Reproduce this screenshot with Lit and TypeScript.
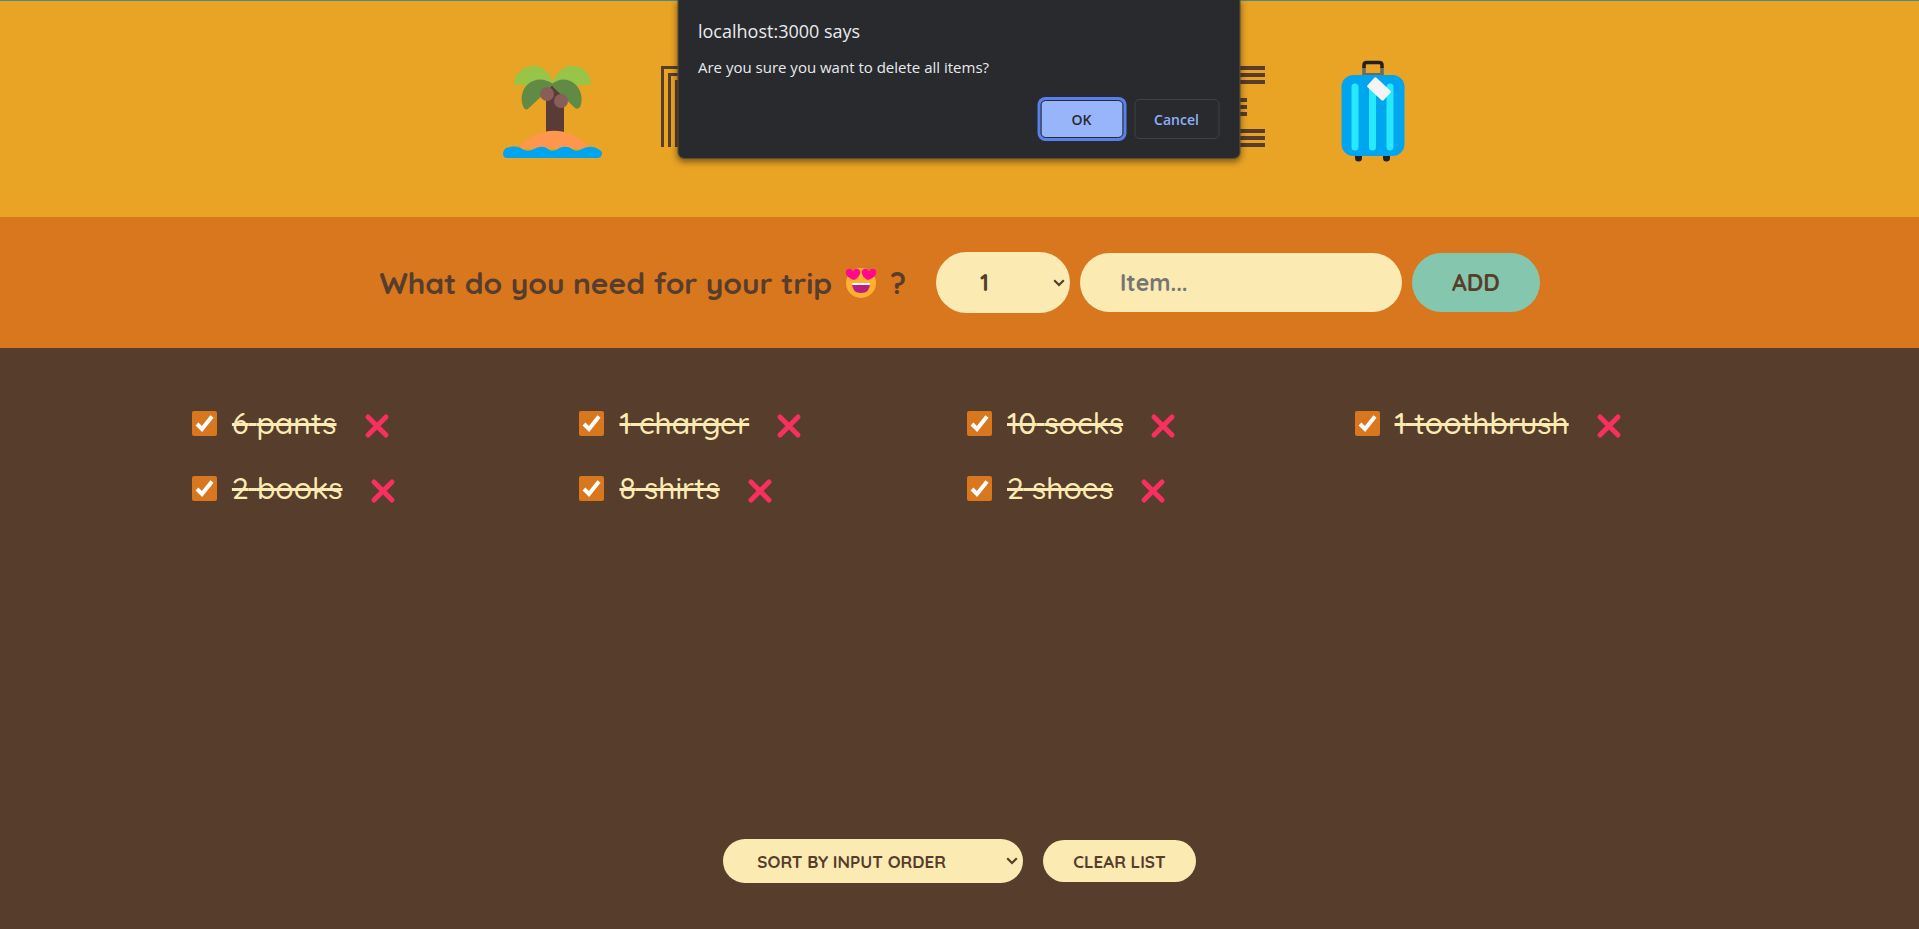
import { LitElement, html, css, svg } from "lit";
import { customElement, state } from "lit/decorators.js";
import { classMap } from "lit/directives/class-map.js";

interface Item {
  id: number;
  quantity: number;
  description: string;
  packed: boolean;
}

const palm = html`<svg class="palm" viewBox="0 -5 100 102" aria-hidden="true">
  <path d="M44 28 L50 20 L62 31 V68 H44Z" fill="#5b3b38" />
  <path d="M12 18 C14 7 22 1 32 1 C42 1 49 9 51 18 C53 9 60 1 70 1 C80 1 87 7 89 17 Q89 20 86 20 H15 Q12 20 12 18Z" fill="#98c547" />
  <path d="M51 19 C43 13 33 13 26 19 C19 25 18 36 22 43 Q24 46 27 43 L47 24Z" fill="#618a45" />
  <path d="M50 19 C57 13 66 13 73 19 C80 25 81 36 78 42 Q76 45 73 43 L51 22Z" fill="#618a45" />
  <circle cx="45" cy="29" r="7" fill="#8a5e58" />
  <circle cx="59" cy="36" r="7" fill="#8a5e58" />
  <path d="M16 83 C38 60 66 60 88 83Z" fill="#fe964e" />
  <path d="M4 83 C10 81 16 81 20 84 Q26 87 32 84 C38 81 42 81 46 84 Q50 87 56 84 C60 81 66 81 70 84 Q74 87 80 84 C86 81 91 81 96 84 Q100 86 100 88 Q100 93 95 93 H5 Q1 93 1 88 Q1 85 4 83Z" fill="#00a4ef" />
</svg>`;

const suitcase = html`<svg class="suitcase" viewBox="0 0 64 102" aria-hidden="true">
  <path d="M23 15 V7" fill="none" stroke="#686867" stroke-width="3.5" />
  <path d="M41 15 V7" fill="none" stroke="#686867" stroke-width="3.5" />
  <path d="M22 14 H42" stroke="#686867" stroke-width="2" />
  <path d="M23 8 V5 Q23 2.500 26 2.500 H38 Q41 2.500 41 5 V8" fill="none" stroke="#212121" stroke-width="3.500" />
  <path d="M14 95 H21 V98 a3.500 3.500 0 0 1 -7 0Z M42 95 H49 V98 a3.500 3.500 0 0 1 -7 0Z" fill="#212121" />
  <rect x="0.500" y="15" width="63" height="81" rx="12" fill="#00a5ef" />
  <path d="M14 27 V87 M31.500 27 V87 M49 27 V87" stroke="#26eafc" stroke-width="7" stroke-linecap="round" />
  <rect x="-11" y="-6.500" width="22" height="13" rx="1.500" transform="translate(38 29) rotate(43)" fill="#f4f4f4" />
</svg>`;

const heartEyes = html`<svg class="face" viewBox="0 0 32 32" role="img" aria-label="heart eyes">
  <circle cx="16" cy="16" r="15" fill="#ffb02e" />
  <path d="M7 16 H25 Q25 26 16 26 Q7 26 7 16Z" fill="#bb1d80" />
  <path d="M7 16 H25 V17 Q25 18 24 18 H8 Q7 18 7 17Z" fill="#fff" />
  <path d="M9 13 C3 11 0 8 1 4 C2 1 6 1 8 4 C10 1 14 1 15 4 C16 8 12 12 9 13Z" fill="#ff0a8c" />
  <path d="M23 13 C29 11 32 8 31 4 C30 1 26 1 24 4 C22 1 18 1 17 4 C16 8 20 12 23 13Z" fill="#ff0a8c" />
</svg>`;

const chevron = html`<svg class="chevron" viewBox="0 0 12 8" aria-hidden="true">
  <path d="M1.200 1.200 L6 6 L10.800 1.200" fill="none" stroke="currentColor" stroke-width="2.200" />
</svg>`;

@customElement("app-root")
export class AppRoot extends LitElement {
  @state() private items: Item[] = [
    [6, "pants"],
    [1, "charger"],
    [10, "socks"],
    [1, "toothbrush"],
    [2, "books"],
    [8, "shirts"],
    [2, "shoes"],
  ].map(([quantity, description], id) => ({
    id,
    quantity: quantity as number,
    description: description as string,
    packed: true,
  }));
  @state() private confirming = true;

  static styles = css`
    :host {
      --brown: #563d2c;
      --cream: #fbeab1;
      --orange: #d9771f;
      display: grid;
      grid-template-rows: auto auto 1fr;
      min-height: 100vh;
      color: var(--brown);
      font-family: Quicksand, Lato, sans-serif;
      font-weight: 700;
    }
    * {
      box-sizing: border-box;
    }
    button, input, select {
      font: inherit;
      color: inherit;
      border: none;
      margin: 0;
    }
    button {
      cursor: pointer;
    }
    header {
      display: flex;
      justify-content: center;
      align-items: flex-start;
      height: 217px;
      padding: 59px 12px 0 0;
      border-top: 1px solid #4d8a86;
      background: #e9a325;
    }
    .palm {
      width: 100px;
      height: 102px;
    }
    .suitcase {
      width: 64px;
      height: 102px;
    }
    .banner {
      display: flex;
      justify-content: space-between;
      width: 604px;
      height: 81px;
      margin: 6px 76px 0 59px;
    }
    .arch {
      width: 40px;
      height: 81px;
      padding: 4px 0 0 4px;
      border: solid var(--brown);
      border-width: 3px 0 0 3px;
    }
    .arch .arch {
      width: auto;
      height: 74px;
    }
    .arch .arch .arch {
      height: 67px;
    }
    .stripes {
      display: flex;
      flex-direction: column;
      justify-content: space-between;
      width: 40px;
    }
    .stripe {
      height: 18px;
      background: repeating-linear-gradient(var(--brown) 0 4px, transparent 4px 7px);
    }
    .stripe.short {
      margin-right: 18px;
    }
    .add {
      display: flex;
      justify-content: center;
      align-items: center;
      gap: 10px;
      height: 131px;
      background: var(--orange);
      font-size: 23px;
    }
    .add h3 {
      display: flex;
      align-items: center;
      gap: 13px;
      margin: 0 20px 0 0;
      font-size: 30px;
    }
    .face {
      width: 32px;
      height: 32px;
    }
    .pick {
      display: grid;
      align-items: center;
    }
    .pick > * {
      grid-area: 1 / 1;
    }
    .pick select {
      appearance: none;
      width: 100%;
      border-radius: 62px;
      background: var(--cream);
    }
    .chevron {
      width: 12px;
      height: 8px;
      justify-self: end;
      margin-right: 5px;
      pointer-events: none;
    }
    .quantity {
      width: 134px;
    }
    .quantity select {
      height: 61px;
      padding: 0 44px;
    }
    .name {
      width: 322px;
      height: 59px;
      padding: 0 40px;
      border-radius: 62px;
      background: var(--cream);
    }
    .name::placeholder {
      color: #757575;
    }
    .add button {
      height: 59px;
      padding: 0 40px;
      border-radius: 62px;
      background: #84c7ae;
    }
    main {
      display: flex;
      flex-direction: column;
      justify-content: space-between;
      align-items: center;
      gap: 40px;
      padding: 50px 0 46px;
      background: var(--brown);
    }
    ul {
      display: grid;
      grid-template-columns: repeat(4, 1fr);
      gap: 15px;
      width: 80%;
      margin: 0;
      padding: 0;
      list-style: none;
    }
    li {
      display: flex;
      align-items: center;
      height: 50px;
      color: var(--cream);
      font-size: 30px;
      font-weight: 500;
    }
    .item {
      display: flex;
      align-items: center;
      gap: 15px;
    }
    .packed {
      text-decoration: line-through;
      text-decoration-thickness: 3px;
    }
    .tick {
      display: grid;
      color: #fff;
    }
    .tick > * {
      grid-area: 1 / 1;
      width: 25px;
      height: 25px;
    }
    .tick input {
      appearance: none;
      border-radius: 2px;
      background: var(--cream);
    }
    .tick input:checked {
      background: var(--orange);
    }
    .tick svg {
      pointer-events: none;
    }
    .remove {
      display: flex;
      margin: 6px 0 0 27px;
      padding: 0;
      background: none;
    }
    .remove svg {
      width: 27px;
      height: 27px;
    }
    .actions {
      display: flex;
      align-items: center;
      gap: 20px;
      font-size: 17px;
    }
    .sort {
      width: 300px;
    }
    .sort select {
      height: 44px;
      padding: 0 34px;
    }
    .clear {
      height: 42px;
      padding: 0 30px;
      border-radius: 62px;
      background: var(--cream);
    }
    .dialog {
      position: absolute;
      top: 0;
      left: 50%;
      transform: translateX(-50%);
      width: 561px;
      margin-left: -1px;
      padding: 19px 20px;
      border-radius: 0 0 6px 6px;
      background: #292a2d;
      box-shadow: 0 0 0 1px #5c5034, 0 3px 6px 1px rgb(0 0 0 / 45%);
      color: #e8eaed;
      font-family: "Segoe UI", "Open Sans", sans-serif;
      font-size: 15px;
      font-weight: 400;
    }
    .dialog h2 {
      margin: 0;
      font-size: 18px;
      line-height: 24px;
      font-weight: 400;
    }
    .dialog p {
      margin: 13px 0 21px;
      line-height: 22px;
    }
    .choices {
      display: flex;
      justify-content: flex-end;
      align-items: center;
      gap: 11px;
    }
    .choices button {
      height: 40px;
      border: 1px solid #3f4145;
      border-radius: 5px;
      background: none;
      color: #8fb0f9;
      font-size: 14px;
      font-weight: 600;
      width: 85px;
    }
    .choices .ok {
      width: 83px;
      height: 38px;
      border-color: #292a2d;
      background: #98b4fa;
      background-clip: padding-box;
      box-shadow: 0 0 0 3px #5a80ee;
      color: #292a2d;
    }
  `;

  private toggle(id: number) {
    this.items = this.items.map((item) => (item.id === id ? { ...item, packed: !item.packed } : item));
  }

  private remove(id: number) {
    this.items = this.items.filter((item) => item.id !== id);
  }

  private add(event: Event) {
    event.preventDefault();
    const form = event.target as HTMLFormElement;
    const data = new FormData(form);
    const description = String(data.get("description")).trim();
    if (!description) return;
    this.items = [...this.items, { id: Date.now(), quantity: Number(data.get("quantity")), description, packed: false }];
    form.reset();
  }

  private clear() {
    this.items = [];
    this.confirming = false;
  }

  private renderItem(item: Item) {
    return html`<li>
      <label class="item">
        <span class="tick">
          <input type="checkbox" .checked=${item.packed} @change=${() => this.toggle(item.id)} />
          <svg viewBox="0 0 25 25" aria-hidden="true">
            ${item.packed ? svg`<path d="M5 13 L10 18 L20 5.500" fill="none" stroke="currentColor" stroke-width="4" />` : ""}
          </svg>
        </span>
        <span class=${classMap({ packed: item.packed })}>${item.quantity} ${item.description}</span>
      </label>
      <button class="remove" aria-label="Remove ${item.description}" @click=${() => this.remove(item.id)}>
        <svg viewBox="0 0 27 27" aria-hidden="true">
          <path d="M4 4 L22 22 M22 4 L4 22" stroke="#f92f60" stroke-width="5" stroke-linecap="round" />
        </svg>
      </button>
    </li>`;
  }

  render() {
    return html`
      <header>
        ${palm}
        <div class="banner" aria-hidden="true">
          <div class="arch"><div class="arch"><div class="arch"></div></div></div>
          <div class="stripes">
            <div class="stripe"></div>
            <div class="stripe short"></div>
            <div class="stripe"></div>
          </div>
        </div>
        ${suitcase}
      </header>
      <form class="add" @submit=${this.add}>
        <h3><span>What do you need for your trip</span>${heartEyes}<span>?</span></h3>
        <div class="pick quantity">
          <select name="quantity" aria-label="Quantity">
            ${Array.from({ length: 20 }, (_, i) => html`<option value=${i + 1}>${i + 1}</option>`)}
          </select>
          ${chevron}
        </div>
        <input class="name" name="description" type="text" placeholder="Item..." aria-label="Item" />
        <button>ADD</button>
      </form>
      <main>
        <ul>${this.items.map((item) => this.renderItem(item))}</ul>
        <div class="actions">
          <div class="pick sort">
            <select aria-label="Sort">
              <option>SORT BY INPUT ORDER</option>
              <option>SORT BY DESCRIPTION</option>
              <option>SORT BY PACKED STATUS</option>
            </select>
            ${chevron}
          </div>
          <button class="clear" @click=${() => (this.confirming = true)}>CLEAR LIST</button>
        </div>
      </main>
      ${this.confirming
        ? html`<div class="dialog" role="dialog" aria-labelledby="origin">
            <h2 id="origin">localhost:3000 says</h2>
            <p>Are you sure you want to delete all items?</p>
            <div class="choices">
              <button class="ok" @click=${this.clear}>OK</button>
              <button @click=${() => (this.confirming = false)}>Cancel</button>
            </div>
          </div>`
        : ""}
    `;
  }
}
